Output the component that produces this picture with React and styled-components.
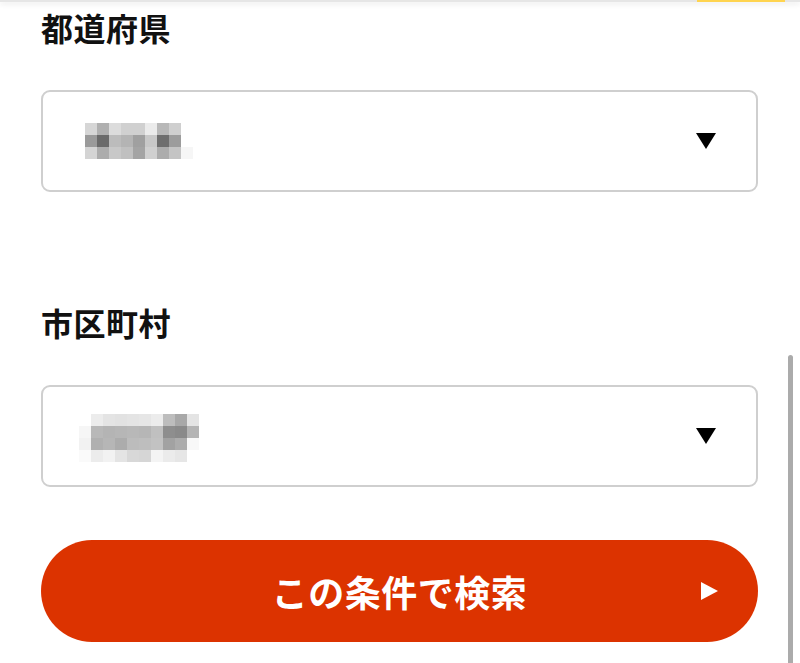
import React from "react";
import styled, { createGlobalStyle } from "styled-components";

const GlobalStyle = createGlobalStyle`
  html, body {
    margin: 0;
    padding: 0;
    background: #ffffff;
    overflow: hidden;
  }
  body {
    font-family: "Noto Sans CJK JP", "Noto Sans", sans-serif;
    color: #111111;
  }
`;

const Page = styled.div`
  position: relative;
  width: 800px;
  height: 663px;
  overflow: hidden;
`;

const HeaderEdge = styled.div`
  display: flex;
  justify-content: flex-end;
  height: 2px;
  background: #e6e6e6;
  box-shadow: 0 2px 5px rgba(0, 0, 0, 0.12);
  padding-right: 15px;
`;

const ActiveTab = styled.div`
  width: 88px;
  height: 2px;
  background: #ffd44f;
`;

const Form = styled.div`
  display: flex;
  flex-direction: column;
  padding: 1px 42px 0 41px;
`;

const Label = styled.div`
  font-size: 32px;
  font-weight: 700;
  line-height: 48px;
  letter-spacing: 0.5px;
  margin-top: ${(props) => props.top || 0}px;
`;

const SelectBox = styled.div`
  display: flex;
  align-items: center;
  justify-content: space-between;
  box-sizing: border-box;
  height: 102px;
  margin-top: 39px;
  border: 2px solid #cfcfcf;
  border-radius: 9px;
  padding: 0 40px 0 ${(props) => props.indent}px;
`;

const Mosaic = styled.div`
  display: grid;
  grid-template-columns: repeat(${(props) => props.cols}, 12px);
  grid-auto-rows: 12px;
  margin-top: ${(props) => props.shift || 0}px;
`;

const Cell = styled.div`
  background: ${(props) => props.shade};
`;

const DownArrow = styled.div`
  width: 0;
  height: 0;
  border-left: 10.5px solid transparent;
  border-right: 10.5px solid transparent;
  border-top: 16px solid #000000;
`;

const SearchButton = styled.button`
  position: relative;
  display: flex;
  align-items: center;
  justify-content: center;
  height: 102px;
  margin-top: 53px;
  border: none;
  border-radius: 51px;
  background: #dc3300;
  color: #ffffff;
  font-family: "Noto Sans CJK JP", "Noto Sans", sans-serif;
  font-size: 36px;
  font-weight: 700;
  letter-spacing: 0.5px;
  padding: 0;
`;

const PlayArrow = styled.span`
  position: absolute;
  right: 40px;
  top: 50%;
  margin-top: -9px;
  width: 0;
  height: 0;
  border-top: 9px solid transparent;
  border-bottom: 9px solid transparent;
  border-left: 17px solid #ffffff;
`;

const ScrollThumb = styled.div`
  position: absolute;
  right: 7px;
  top: 355px;
  width: 5px;
  height: 320px;
  border-radius: 3px;
  background: #ababab;
`;

const prefMosaic = [
  ["#d6d6d6", "#b0b0b0", "#dcdcdc", "#d0d0d0", "#d0d0d0", "#ebebeb", "#b8b8b8", "#cfcfcf", "#ffffff"],
  ["#9a9a9a", "#6a6a6a", "#bcbcbc", "#b4b4b4", "#a0a0a0", "#c8c8c8", "#6e6e6e", "#9c9c9c", "#ffffff"],
  ["#d4d4d4", "#acacac", "#c8c8c8", "#c0c0c0", "#a4a4a4", "#d0d0d0", "#acacac", "#c4c4c4", "#f6f6f6"],
];

const cityMosaic = [
  ["#ffffff", "#ececec", "#e4e4e4", "#e2e2e2", "#e4e4e4", "#e6e6e6", "#ececec", "#bdbdbd", "#a8a8a8", "#e4e4e4"],
  ["#f6f6f6", "#b8b8b8", "#b4b4b4", "#b6b6b6", "#b8b8b8", "#b6b6b6", "#c0c0c0", "#8e8e8e", "#8a8a8a", "#b4b4b4"],
  ["#f2f2f2", "#b0b0b0", "#b6b6b6", "#acacac", "#bcbcbc", "#bebebe", "#c2c2c2", "#a2a2a2", "#acacac", "#f8f8f8"],
  ["#fafafa", "#ececec", "#f2f2f2", "#e4e4e4", "#d8d8d8", "#d6d6d6", "#f4f4f4", "#ebebeb", "#e6e6e6", "#ffffff"],
];

function BlurredValue({ rows, shift }) {
  return (
    <Mosaic cols={rows[0].length} shift={shift}>
      {rows.flat().map((shade, i) => (
        <Cell key={i} shade={shade} />
      ))}
    </Mosaic>
  );
}

function App() {
  return (
    <>
      <GlobalStyle />
      <Page>
        <HeaderEdge>
          <ActiveTab />
        </HeaderEdge>
        <Form>
          <Label>都道府県</Label>
          <SelectBox indent={42}>
            <BlurredValue rows={prefMosaic} shift={0} />
            <DownArrow />
          </SelectBox>

          <Label top={106}>市区町村</Label>
          <SelectBox indent={36}>
            <BlurredValue rows={cityMosaic} shift={4} />
            <DownArrow />
          </SelectBox>

          <SearchButton>
            この条件で検索
            <PlayArrow />
          </SearchButton>
        </Form>
        <ScrollThumb />
      </Page>
    </>
  );
}

export default App;
